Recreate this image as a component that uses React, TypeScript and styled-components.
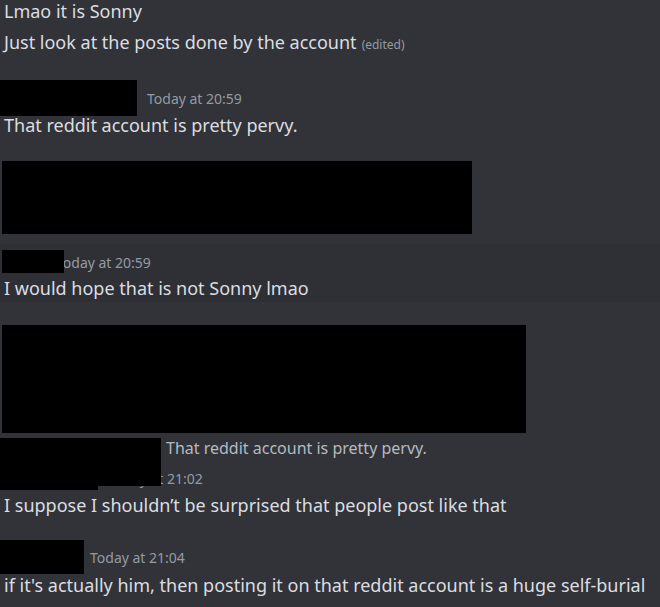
import React from "react";
import styled, { createGlobalStyle } from "styled-components";

const Global = createGlobalStyle`
  html, body { margin: 0; padding: 0; background: #313338; }
  body { font-family: "Noto Sans", "Open Sans", sans-serif; -webkit-font-smoothing: antialiased; }
  #root { width: 660px; height: 607px; overflow: hidden; background: #313338; }
`;

const Chat = styled.div`
  display: flex;
  flex-direction: column;
  width: 660px;
  height: 607px;
  overflow: hidden;
`;

const Row = styled.div<{ $mt?: number; $hover?: boolean; $pt?: number; $pb?: number }>`
  display: flex;
  flex-direction: column;
  margin-top: ${(p) => p.$mt ?? 0}px;
  padding: ${(p) => p.$pt ?? 0}px 0 ${(p) => p.$pb ?? 0}px 0;
  background: ${(p) => (p.$hover ? "#2e3035" : "transparent")};
`;

const Content = styled.div<{ $mt?: number }>`
  margin-top: ${(p) => p.$mt ?? 0}px;
  padding-left: 4px;
  font-size: 18px;
  line-height: 22px;
  color: #dbdee1;
  white-space: nowrap;
`;

const Edited = styled.span`
  font-size: 12px;
  color: #949ba4;
  margin-left: 5px;
`;

const Header = styled.div<{ $mt?: number }>`
  display: flex;
  align-items: flex-start;
  margin-top: ${(p) => p.$mt ?? 0}px;
  height: 22px;
`;

const Redacted = styled.span<{ $w: number; $h: number; $top: number; $left?: number }>`
  display: block;
  flex: none;
  position: relative;
  z-index: 1;
  width: ${(p) => p.$w}px;
  height: ${(p) => p.$h}px;
  margin-left: ${(p) => p.$left ?? 0}px;
  margin-top: ${(p) => p.$top}px;
  margin-bottom: ${(p) => 22 - p.$h - p.$top}px;
  background: #000;
`;

const Stamp = styled.span<{ $gap: number }>`
  margin-left: ${(p) => p.$gap}px;
  font-size: 14px;
  line-height: 22px;
  color: #949ba4;
  white-space: nowrap;
`;

const Attachment = styled.div<{ $w: number; $h: number; $mt: number }>`
  width: ${(p) => p.$w}px;
  height: ${(p) => p.$h}px;
  margin: ${(p) => p.$mt}px 0 0 2px;
  background: #000;
  flex: none;
`;

const Reply = styled.div<{ $mt?: number }>`
  display: flex;
  align-items: flex-start;
  margin-top: ${(p) => p.$mt ?? 0}px;
  height: 22px;
`;

const ReplyText = styled.span`
  margin-left: 5px;
  font-size: 16px;
  line-height: 22px;
  color: #b5bac1;
  white-space: nowrap;
`;

export default function App() {
  return (
    <>
      <Global />
      <Chat>
        <Content>Lmao it is Sonny</Content>
        <Content $mt={9}>
          Just look at the posts done by the account<Edited>(edited)</Edited>
        </Content>

        <Row $mt={32}>
          <Header>
            <Redacted $w={137} $h={36} $top={-8} />
            <Stamp $gap={10}>Today at 20:59</Stamp>
          </Header>
          <Content $mt={4}>That reddit account is pretty pervy.</Content>
        </Row>

        <Attachment $w={470} $h={73} $mt={25} />

        <Row $mt={10} $hover $pt={8} $pb={3}>
          <Header>
            <Redacted $w={62} $h={23} $top={-2} $left={2} />
            <Stamp $gap={-8}>Today at 20:59</Stamp>
          </Header>
          <Content $mt={3}>I would hope that is not Sonny lmao</Content>
        </Row>

        <Attachment $w={524} $h={108} $mt={23} />

        <Row $mt={4}>
          <Reply>
            <Redacted $w={161} $h={48} $top={1} />
            <ReplyText>That reddit account is pretty pervy.</ReplyText>
          </Reply>
          <Header $mt={9}>
            <Redacted $w={98} $h={22} $top={0} />
            <Stamp $gap={10}>Today at 21:02</Stamp>
          </Header>
          <Content $mt={4}>I suppose I shouldn’t be surprised that people post like that</Content>
        </Row>

        <Row $mt={31}>
          <Header>
            <Redacted $w={84} $h={34} $top={-7} />
            <Stamp $gap={6}>Today at 21:04</Stamp>
          </Header>
          <Content $mt={5}>
            if it's actually him, then posting it on that reddit account is a huge self-burial
          </Content>
        </Row>
      </Chat>
    </>
  );
}
